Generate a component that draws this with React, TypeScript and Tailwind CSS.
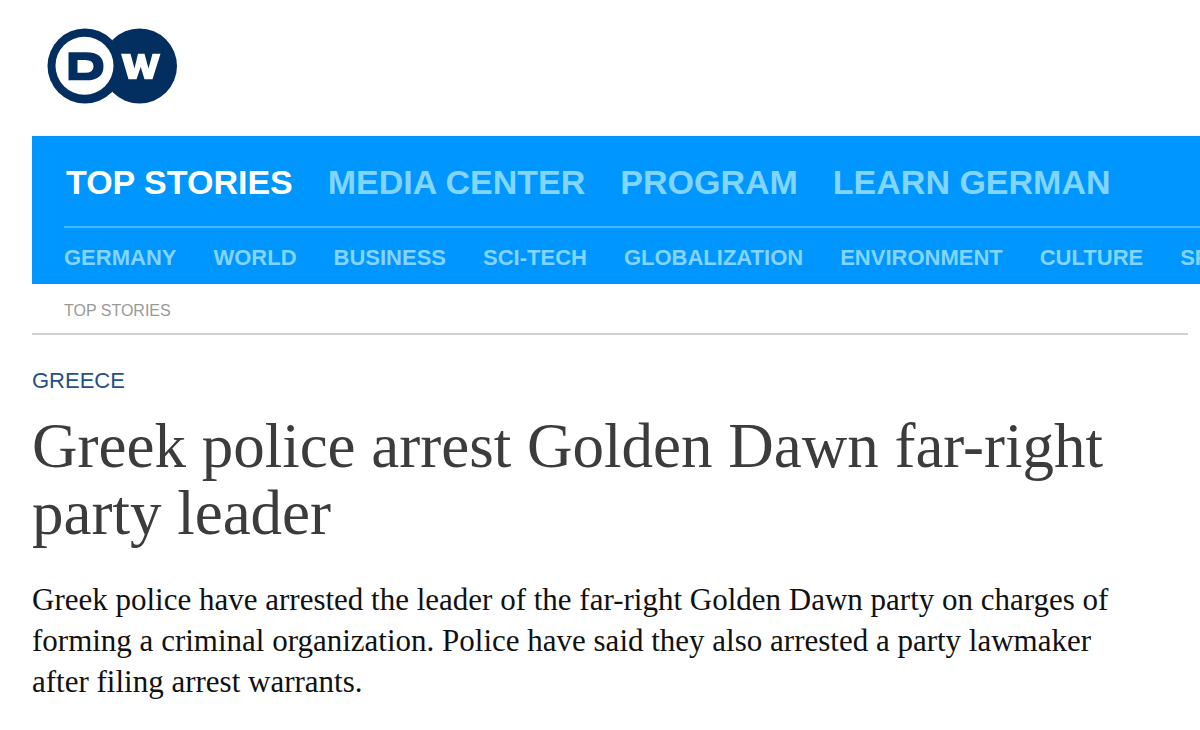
const sections = ["TOP STORIES", "MEDIA CENTER", "PROGRAM", "LEARN GERMAN"];

const topics = [
  "GERMANY",
  "WORLD",
  "BUSINESS",
  "SCI-TECH",
  "GLOBALIZATION",
  "ENVIRONMENT",
  "CULTURE",
  "SPORTS",
];

function Logo() {
  return (
    <svg viewBox="0 0 130 76" className="h-[76px] w-[130px]" role="img" aria-label="DW">
      <circle cx="38" cy="38" r="37.5" fill="#022f5f" />
      <circle cx="92.500" cy="38" r="37.500" fill="#022f5f" />
      <circle cx="37.500" cy="37.700" r="29" fill="#fff" />
      <path
        fill="#022f5f"
        fillRule="evenodd"
        d="M21.500 24.300H39Q56.500 24.300 56.500 38.200Q56.500 52.300 39 52.300H21.500ZM30.500 32V44.800H38Q46.500 44.800 46.500 38.400Q46.500 32 38 32Z"
      />
      <path
        fill="#fff"
        d="M74 25.800H83.500L87.500 40.500L91 25.800H97.500L101.500 40.500L105.500 25.800H113.500L105.500 51.300H97.500L93.700 39L89.500 51.300H81.500Z"
      />
    </svg>
  );
}

export default function App() {
  return (
    <div className="overflow-x-hidden bg-white pb-8 font-['Liberation_Sans',Arial,sans-serif]">
      <header>
        <a href="#home" className="ml-[47px] block w-fit pt-7 pb-8">
          <Logo />
        </a>
        <nav className="ml-8 overflow-hidden bg-[#0096ff] pl-8 font-bold whitespace-nowrap text-[#82d5ff]">
          <ul className="flex gap-[35px] border-b-2 border-[#42b8ff] pt-[27px] pb-[25px] pl-0.5 text-[34px] leading-[38px]">
            {sections.map((name, i) => (
              <li key={name} className="shrink-0">
                <a href="#section" className={i === 0 ? "text-white" : ""}>
                  {name}
                </a>
              </li>
            ))}
          </ul>
          <ul className="flex gap-[37px] pt-[18px] pb-[14px] text-[22px] leading-6">
            {topics.map((name) => (
              <li key={name} className="shrink-0">
                <a href="#topic">{name}</a>
              </li>
            ))}
          </ul>
        </nav>
      </header>
      <div className="mr-3 ml-8 border-b-2 border-[#d2d2d2] pt-[17px] pb-3 pl-8 text-base leading-5 text-[#999]">
        <a href="#top">TOP STORIES</a>
      </div>
      <main className="mr-16 ml-8 pt-8">
        <p className="text-[22px] leading-7 text-[#25508a]">GREECE</p>
        <h1 className="pt-[18px] font-['Liberation_Serif',serif] text-[63px] leading-[67px] text-[#3c3c3c]">
          Greek police arrest Golden Dawn far-right
          <br />
          party leader
        </h1>
        <p className="pt-8 font-['Liberation_Serif',serif] text-[31px] leading-[41px] text-[#111]">
          Greek police have arrested the leader of the far-right Golden Dawn party on charges of
          <br />
          forming a criminal organization. Police have said they also arrested a party lawmaker
          <br />
          after filing arrest warrants.
        </p>
      </main>
    </div>
  );
}
